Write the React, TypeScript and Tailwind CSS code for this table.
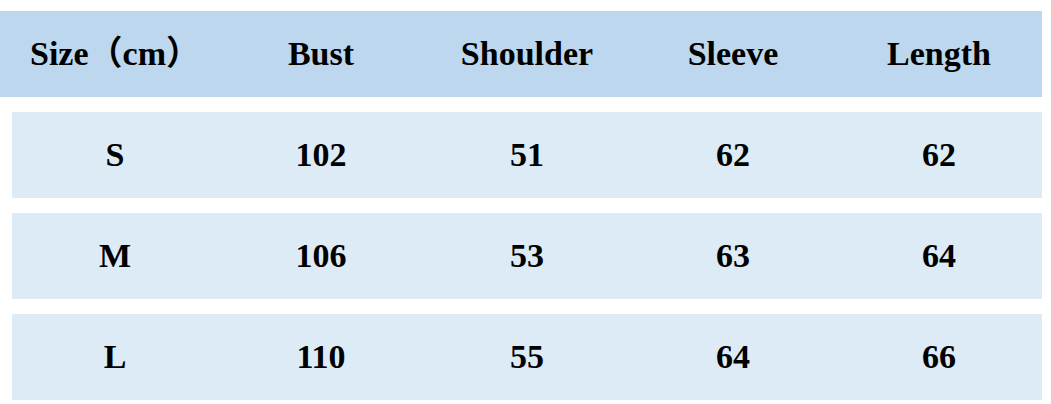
import React from 'react';

const headers = ['Size（cm）', 'Bust', 'Shoulder', 'Sleeve', 'Length'];

const rows = [
  ['S', '102', '51', '62', '62'],
  ['M', '106', '53', '63', '64'],
  ['L', '110', '55', '64', '66'],
];

const App: React.FC = () => {
  return (
    <div
      className="w-[1051px] h-[404px] bg-white pt-[11px] pr-[9px] text-black"
      style={{ fontFamily: '"Liberation Serif", "Noto Sans CJK SC", serif' }}
    >
      {/* header band */}
      <div className="h-[86px] bg-[#bdd7ee] pl-[12px] grid grid-cols-5 items-center">
        {headers.map((h) => (
          <div key={h} className="text-center text-[34px] leading-none font-bold">
            {h}
          </div>
        ))}
      </div>

      {/* size rows */}
      <div className="ml-[12px] mt-[15px] flex flex-col gap-[15px]">
        {rows.map((r) => (
          <div key={r[0]} className="h-[86px] bg-[#ddebf7] grid grid-cols-5 items-center">
            {r.map((v, i) => (
              <div key={i} className="text-center text-[34px] leading-none font-bold">
                {v}
              </div>
            ))}
          </div>
        ))}
      </div>
    </div>
  );
};

export default App;
